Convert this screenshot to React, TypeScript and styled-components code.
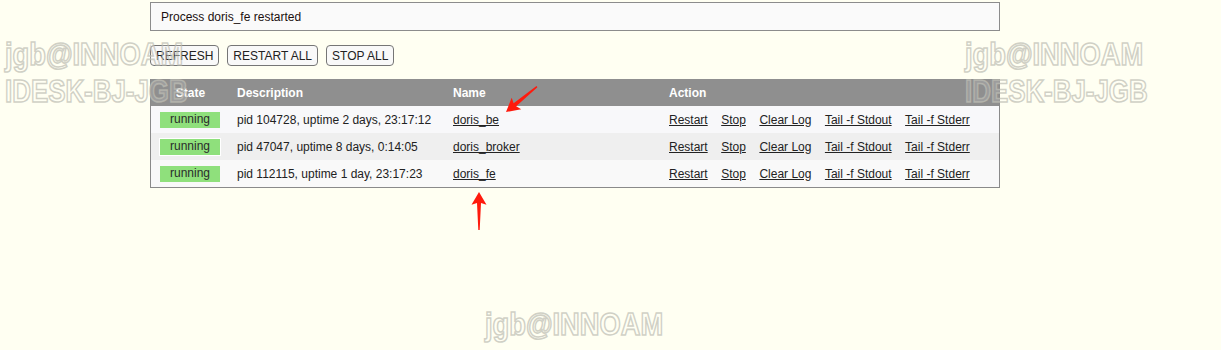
import styled, { createGlobalStyle } from "styled-components";

const GlobalStyle = createGlobalStyle`
    html, body {
        margin: 0;
        padding: 0;
        background: #fffff2;
        font-family: "Liberation Sans", Arial, sans-serif;
        font-size: 12px;
        color: #222;
    }
`

const Page = styled.div`
    position: relative;
    width: 1221px;
    height: 350px;
    overflow: hidden;
    padding: 2px 0 0 150px;
    box-sizing: border-box;
`

const Content = styled.div`
    width: 850px;
    display: flex;
    flex-direction: column;
`

const Message = styled.div`
    height: 29px;
    box-sizing: border-box;
    border: 1px solid #8c8c8c;
    background: #fafafa;
    padding: 0 10px;
    display: flex;
    align-items: center;
    color: #1a1010;
`

const Toolbar = styled.div`
    display: flex;
    gap: 8px;
    margin-top: 14px;
`

const ToolButton = styled.button`
    height: 21px;
    padding: 0 5px;
    border: 1px solid #767676;
    border-radius: 4px;
    background: #f9f9f9;
    font-family: "Liberation Sans", Arial, sans-serif;
    font-size: 12px;
    color: #222;
`

const Table = styled.div`
    margin-top: 13px;
    border: 1px solid #8a8a8a;
    border-top: none;
`

const Row = styled.div<{ $bg: string }>`
    display: grid;
    grid-template-columns: 79px 216px 216px 1fr;
    height: 27px;
    align-items: center;
    background: ${(p) => p.$bg};
`

const HeadCell = styled.div<{ $center?: boolean }>`
    color: #fff;
    font-weight: bold;
    padding-left: ${(p) => (p.$center ? "0" : "7px")};
    text-align: ${(p) => (p.$center ? "center" : "left")};
`

const Cell = styled.div`
    padding-left: 7px;
    white-space: nowrap;
`

const StateCell = styled.div`
    padding-left: 9px;
`

const Badge = styled.span<{ $framed?: boolean }>`
    display: inline-block;
    width: 60px;
    height: 16px;
    line-height: 15px;
    text-align: center;
    background: #8fe07c;
    color: #2b2b2b;
    box-shadow: ${(p) => (p.$framed ? "0 0 0 1px #fff" : "none")};
`

const Link = styled.a`
    color: #222;
    text-decoration: underline;
`

const Actions = styled.div`
    display: flex;
    gap: 13.5px;
    padding-left: 7px;
`

const Watermark = styled.div<{ $x: number; $y: number }>`
    position: absolute;
    left: ${(p) => p.$x}px;
    top: ${(p) => p.$y}px;
    display: flex;
    flex-direction: column;
    gap: 1px;
    pointer-events: none;
`

const MarkLine = styled.span<{ $scale: number }>`
    display: block;
    font-family: "Liberation Sans", Arial, sans-serif;
    font-weight: bold;
    font-size: 31px;
    line-height: 36px;
    white-space: nowrap;
    color: rgba(255, 255, 255, 0.12);
    -webkit-text-stroke: 1.6px rgba(190, 190, 180, 0.72);
    transform: scaleX(${(p) => p.$scale});
    transform-origin: left center;
`

const ArrowLayer = styled.svg`
    position: absolute;
    left: 0;
    top: 0;
    pointer-events: none;
`

const rows = [
    { desc: "pid 104728, uptime 2 days, 23:17:12", name: "doris_be", bg: "#f8f8fa" },
    { desc: "pid 47047, uptime 8 days, 0:14:05", name: "doris_broker", bg: "#efefef", framed: true },
    { desc: "pid 112115, uptime 1 day, 23:17:23", name: "doris_fe", bg: "#f9f9f9" },
]

const actions = ["Restart", "Stop", "Clear Log", "Tail -f Stdout", "Tail -f Stderr"]

const arrowShape = "0,0 7.5,13.5 2,11.5 0.7,40 -0.7,40 -2,11.5 -7.5,13.5"

const WatermarkBlock = ({ x, y, single }: { x: number; y: number; single?: boolean }) => (
    <Watermark $x={x} $y={y}>
        <MarkLine $scale={0.88}>jgb@INNOAM</MarkLine>
        {single ? null : <MarkLine $scale={0.835}>IDESK-BJ-JGB</MarkLine>}
    </Watermark>
)

const App = () => {
    return (
        <>
            <GlobalStyle />
            <Page>
                <Content>
                    <Message>Process doris_fe restarted</Message>
                    <Toolbar>
                        <ToolButton>REFRESH</ToolButton>
                        <ToolButton>RESTART ALL</ToolButton>
                        <ToolButton>STOP ALL</ToolButton>
                    </Toolbar>
                    <Table>
                        <Row $bg="#8f8f8f">
                            <HeadCell $center>State</HeadCell>
                            <HeadCell>Description</HeadCell>
                            <HeadCell>Name</HeadCell>
                            <HeadCell>Action</HeadCell>
                        </Row>
                        {rows.map((row) => (
                            <Row key={row.name} $bg={row.bg}>
                                <StateCell>
                                    <Badge $framed={row.framed}>running</Badge>
                                </StateCell>
                                <Cell>{row.desc}</Cell>
                                <Cell>
                                    <Link href="#">{row.name}</Link>
                                </Cell>
                                <Actions>
                                    {actions.map((a) => (
                                        <Link key={a} href="#">{a}</Link>
                                    ))}
                                </Actions>
                            </Row>
                        ))}
                    </Table>
                </Content>

                <WatermarkBlock x={5} y={37} />
                <WatermarkBlock x={965} y={37} />
                <WatermarkBlock x={485} y={307} single />

                <ArrowLayer width="1221" height="350" viewBox="0 0 1221 350">
                    <polygon points={arrowShape} fill="#ff1a0d" transform="translate(506,112) rotate(-129.3)" />
                    <polygon points={arrowShape} fill="#ff1a0d" transform="translate(479,192) scale(1,0.95)" />
                </ArrowLayer>
            </Page>
        </>
    )
}

export default App
